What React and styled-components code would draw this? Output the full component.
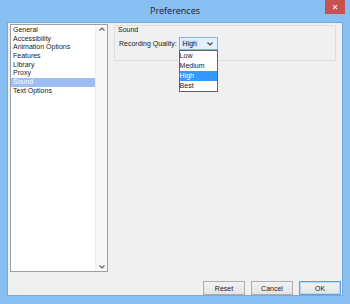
import styled, { createGlobalStyle } from "styled-components";

const Global = createGlobalStyle`
  html, body { margin: 0; padding: 0; }
  body { font-family: "Liberation Sans", Arial, sans-serif; }
`

const Window = styled.div`
  width: 350px;
  height: 304px;
  box-sizing: border-box;
  background: #88bff3;
  padding: 0 7px 8px 7px;
  display: flex;
  flex-direction: column;
`

const TitleBar = styled.div`
  position: relative;
  height: 22px;
  display: flex;
  align-items: center;
  justify-content: center;
  font-family: "Noto Sans", "Liberation Sans", sans-serif;
  font-size: 9px;
  color: #2a2a2a;
  padding-bottom: 2px;
  box-sizing: border-box;
`

const CloseButton = styled.div`
  position: absolute;
  top: 0;
  right: -2px;
  width: 20px;
  height: 14px;
  background: #c75050;
  color: #fff;
  font-family: "DejaVu Sans", sans-serif;
  font-weight: bold;
  font-size: 8px;
  display: flex;
  align-items: center;
  justify-content: center;
`

const Client = styled.div`
  flex: 1;
  background: #f0f0f0;
  border: 1px solid #79a7d8;
  display: flex;
  flex-direction: column;
  padding: 1px 1px 0 2px;
  font-size: 7px;
  color: #1a1a1a;
`

const Body = styled.div`
  height: 248px;
  display: flex;
  gap: 6px;
`

const ListBox = styled.div`
  width: 98px;
  box-sizing: border-box;
  background: #fff;
  border: 1px solid #9a9ea6;
  display: flex;
`

const Items = styled.div`
  flex: 1;
  padding-top: 1px;
`

const Item = styled.div`
  height: 8.7px;
  line-height: 8.7px;
  padding-left: 2px;
  background: ${p => (p.$selected ? "#9ebdf4" : "transparent")};
  color: ${p => (p.$selected ? "#fff" : "#1a1a1a")};
  white-space: nowrap;
`

const ScrollBar = styled.div`
  width: 11px;
  background: #f6f6f6;
  border-left: 1px solid #ececec;
  display: flex;
  flex-direction: column;
  justify-content: space-between;
  align-items: center;
  padding: 2px 0;
`

const Arrow = styled.svg`
  width: 6px;
  height: 4px;
`

const Pane = styled.div`
  flex: 1;
  padding-top: 1px;
  padding-right: 5px;
`

const Group = styled.div`
  height: 36px;
  box-sizing: border-box;
  border: 1px solid #dedede;
  padding: 0 3px;
  display: flex;
  flex-direction: column;
`

const GroupTitle = styled.div`
  height: 8px;
  line-height: 8px;
`

const Row = styled.div`
  display: flex;
  align-items: center;
  margin-top: 3px;
  gap: 2px;
  padding-left: 1px;
`

const Combo = styled.div`
  position: relative;
  width: 39px;
  height: 13px;
  box-sizing: border-box;
  border: 1px solid #7eb4ea;
  background: #e3effb;
  display: flex;
  align-items: center;
  justify-content: space-between;
  padding: 0 4px 0 2px;
`

const ComboText = styled.span`
  background: #cfe3f8;
  padding: 0 1px;
`

const DropList = styled.div`
  position: absolute;
  top: 12px;
  left: -1px;
  width: 39px;
  box-sizing: border-box;
  background: #fff;
  border: 1px solid #646464;
  z-index: 2;
`

const Option = styled.div`
  height: 10px;
  line-height: 10px;
  background: ${p => (p.$selected ? "#3399ff" : "transparent")};
  color: ${p => (p.$selected ? "#fff" : "#1a1a1a")};
`

const Footer = styled.div`
  margin-top: 9px;
  height: 14px;
  display: flex;
  justify-content: flex-end;
  gap: 6px;
`

const Button = styled.div`
  width: 42px;
  height: 14px;
  box-sizing: border-box;
  border: 1px solid ${p => (p.$default ? "#5c9ee0" : "#adadad")};
  box-shadow: ${p => (p.$default ? "inset 0 0 0 1px #b9d9f7" : "none")};
  background: linear-gradient(#f2f2f2, #e4e4e4);
  display: flex;
  align-items: center;
  justify-content: center;
`

const items = ["General", "Accessibility", "Animation Options", "Features", "Library", "Proxy", "Sound", "Text Options"]
const options = ["Low", "Medium", "High", "Best"]

export default function App() {
  return (
    <>
      <Global />
      <Window>
        <TitleBar>
          Preferences
          <CloseButton>✕</CloseButton>
        </TitleBar>
        <Client>
          <Body>
            <ListBox>
              <Items>
                {items.map(i => (
                  <Item key={i} $selected={i === "Sound"}>{i}</Item>
                ))}
              </Items>
              <ScrollBar>
                <Arrow viewBox="0 0 6 4"><path d="M0.5 3.5 L3 1 L5.5 3.5" fill="none" stroke="#606060" strokeWidth="1.1" /></Arrow>
                <Arrow viewBox="0 0 6 4"><path d="M0.5 0.5 L3 3 L5.5 0.5" fill="none" stroke="#606060" strokeWidth="1.1" /></Arrow>
              </ScrollBar>
            </ListBox>
            <Pane>
              <Group>
                <GroupTitle>Sound</GroupTitle>
                <Row>
                  Recording Quality:
                  <Combo>
                    <ComboText>High</ComboText>
                    <Arrow viewBox="0 0 6 4"><path d="M0.5 0.5 L3 3 L5.5 0.5" fill="none" stroke="#404040" strokeWidth="1.1" /></Arrow>
                    <DropList>
                      {options.map(o => (
                        <Option key={o} $selected={o === "High"}>{o}</Option>
                      ))}
                    </DropList>
                  </Combo>
                </Row>
              </Group>
            </Pane>
          </Body>
          <Footer>
            <Button>Reset</Button>
            <Button>Cancel</Button>
            <Button $default>OK</Button>
          </Footer>
        </Client>
      </Window>
    </>
  )
}
